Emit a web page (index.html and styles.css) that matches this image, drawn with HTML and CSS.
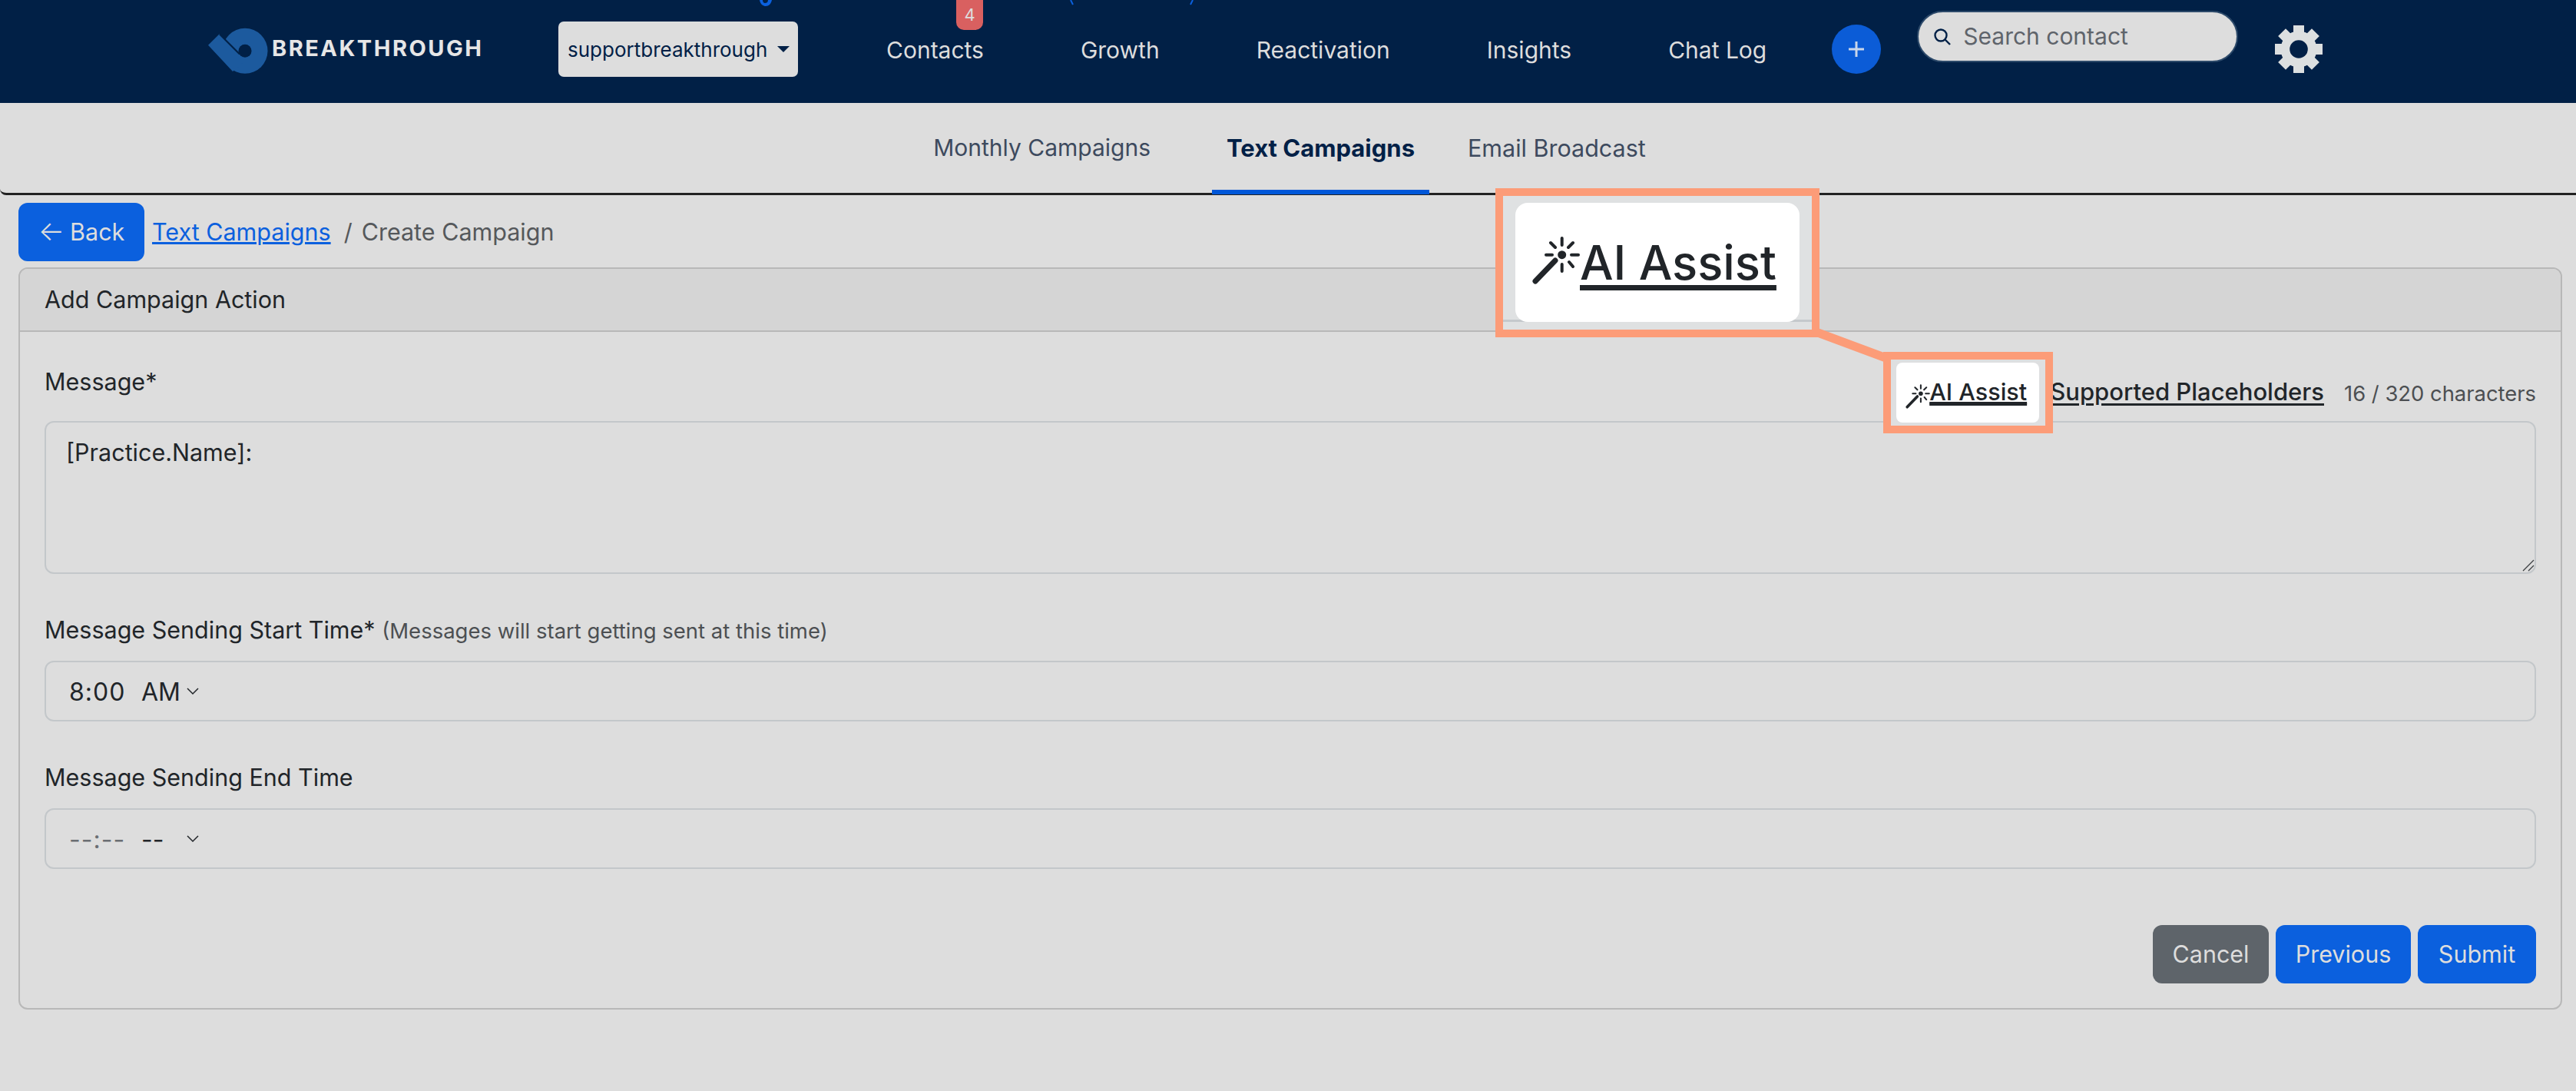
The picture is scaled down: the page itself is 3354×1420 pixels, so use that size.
FILE: index.html
```html
<!DOCTYPE html>
<html lang="en">
<head>
<meta charset="utf-8">
<title>Create Campaign</title>
<link rel="stylesheet" href="styles.css">
</head>
<body>
<svg class="defs" width="0" height="0" aria-hidden="true">
  <symbol id="wand" viewBox="0 0 90 80">
    <g stroke="#212529" stroke-linecap="round" fill="none">
      <path d="M14 66 L40 39" stroke-width="7"/>
      <path d="M48.7 10 V19 M48.7 44 V53 M28 31.7 H36 M61 31.7 H70 M34 16 L40 22 M63 16 L57 22 M58 41 L63 47" stroke-width="4"/>
    </g>
    <circle cx="48.7" cy="31.7" r="5.5" fill="#212529"/>
  </symbol>
</svg>

<header class="topbar">
  <svg class="stray stray-g" width="20" height="9" viewBox="0 0 20 9"><path d="M2 0 C3 6 7 8 10 8 C14 8 17 5 18 0 H13 C13 3 11 4 9 4 C7 4 6 2 6 0 Z" fill="#0b60de"/></svg>
  <svg class="stray stray-l" width="8" height="7" viewBox="0 0 8 7"><path d="M1 0 L4 6" stroke="#0b60de" stroke-width="2"/></svg>
  <svg class="stray stray-r" width="8" height="7" viewBox="0 0 8 7"><path d="M6 0 L3 6" stroke="#0b60de" stroke-width="2"/></svg>

  <a class="brand" href="#">
    <svg class="brand-logo" width="80" height="62" viewBox="9 9 80 62">
      <circle cx="59" cy="39.3" r="29.5" fill="#1c5a9e"/>
      <path d="M11 31.7 L25.7 17.3 L62 50 L43 66 Z" fill="#1c5a9e"/>
      <path d="M26 17.5 L52 43.5" stroke="#012046" stroke-width="2.2"/>
      <circle cx="59" cy="39.3" r="8.5" fill="#012046"/>
    </svg>
    <span class="brand-name">BREAKTHROUGH</span>
  </a>

  <button class="account">supportbreakthrough<span class="caret"></span></button>

  <nav class="mainnav">
    <a href="#" class="navlink">Contacts<span class="badge">4</span></a>
    <a href="#" class="navlink">Growth</a>
    <a href="#" class="navlink">Reactivation</a>
    <a href="#" class="navlink">Insights</a>
    <a href="#" class="navlink">Chat Log</a>
  </nav>

  <button class="add" aria-label="Add">
    <svg width="24" height="24" viewBox="0 0 24 24"><path d="M12 2 V22 M2 12 H22" stroke="#c9d6ea" stroke-width="3"/></svg>
  </button>

  <div class="search">
    <svg width="24" height="24" viewBox="0 0 24 24" fill="none" stroke="#012046" stroke-width="2.4"><circle cx="10" cy="10" r="7.5"/><path d="M15.5 15.5 L22 22"/></svg>
    <span>Search contact</span>
  </div>

  <svg class="gear" width="64" height="64" viewBox="-32 -32 64 64" aria-label="Settings">
    <g fill="#dcdfe0">
      <rect x="-7" y="-31" width="14" height="62"/>
      <rect x="-7" y="-31" width="14" height="62" transform="rotate(45)"/>
      <rect x="-7" y="-31" width="14" height="62" transform="rotate(90)"/>
      <rect x="-7" y="-31" width="14" height="62" transform="rotate(135)"/>
    </g>
    <circle r="17.5" fill="none" stroke="#dcdfe0" stroke-width="12"/>
    <circle r="11.8" fill="#012046"/>
  </svg>
</header>

<div class="subnav">
  <a href="#" class="tab tab-monthly">Monthly Campaigns</a>
  <a href="#" class="tab tab-active">Text Campaigns</a>
  <a href="#" class="tab">Email Broadcast</a>
</div>

<div class="crumbs">
  <a href="#" class="btn btn-primary btn-back"><span class="arrow">←</span> Back</a>
  <a href="#" class="crumb-link">Text Campaigns</a>
  <span class="crumb-sep">/</span>
  <span class="crumb-current">Create Campaign</span>
</div>

<section class="card">
  <h2 class="card-header">Add Campaign Action</h2>
  <div class="card-body">
    <div class="message-row">
      <label class="field-label message-label">Message*</label>
      <div class="message-tools">
        <div class="assist-wrap">
          <span class="spot"></span>
          <a href="#" class="assist"><svg class="wand"><use href="#wand"/></svg><span class="assist-text">AI Assist</span></a>
        </div>
        <a href="#" class="placeholders">Supported Placeholders</a>
        <span class="count">16 / 320 characters</span>
      </div>
    </div>
    <div class="message-wrap">
      <textarea class="message-box">[Practice.Name]:</textarea>
      <svg class="grip" width="16" height="16" viewBox="0 0 16 16"><path d="M1 15 L15 1 M8 15 L15 8" stroke="#3c3f42" stroke-width="1.3" fill="none"/></svg>
    </div>

    <label class="field-label start-label">Message Sending Start Time* <small>(Messages will start getting sent at this time)</small></label>
    <div class="time-input">
      <span class="time-val">8:00</span><span class="time-ampm">AM</span>
      <svg class="chev" width="18" height="10" viewBox="0 0 18 10"><path d="M2 1 L9 8 L16 1" fill="none" stroke="#212529" stroke-width="1.5"/></svg>
    </div>

    <label class="field-label end-label">Message Sending End Time</label>
    <div class="time-input">
      <span class="time-val time-empty">--:--</span><span class="time-ampm ampm-empty">--</span>
      <svg class="chev" width="18" height="10" viewBox="0 0 18 10"><path d="M2 1 L9 8 L16 1" fill="none" stroke="#212529" stroke-width="1.5"/></svg>
    </div>

    <div class="actions">
      <button class="btn btn-secondary btn-cancel">Cancel</button>
      <button class="btn btn-primary btn-prev">Previous</button>
      <button class="btn btn-primary btn-submit">Submit</button>
    </div>
  </div>
</section>

<svg class="connector" width="90" height="50" viewBox="0 0 90 50"><polygon points="0,0 86,32 86,44 0,12" fill="#fc9c78"/></svg>
<div class="callout">
  <div class="callout-inner"><svg class="wand-big"><use href="#wand"/></svg><span class="callout-text">AI Assist</span></div>
</div>
</body>
</html>
```

FILE: styles.css
```css
* { box-sizing: border-box; }
html, body { margin: 0; height: 100%; }
body {
  background: #dddddd;
  color: #212529;
  font-family: Inter, "Liberation Sans", sans-serif;
  font-size: 30.5px;
  line-height: 1.5;
  position: relative;
  height: 1420px;
  overflow: hidden;
}
a { color: inherit; }
button { font: inherit; border: 0; cursor: pointer; }
.defs { position: absolute; }

.topbar {
  position: relative;
  height: 134px;
  background: #012046;
  display: flex;
  align-items: center;
  padding-left: 271px;
}
.stray { position: absolute; top: 0; }
.stray-g { left: 987px; }
.stray-l { left: 1393px; }
.stray-r { left: 1547px; }

.brand { display: flex; align-items: center; text-decoration: none; margin-right: 101px; }
.brand-logo { margin-left: -2px; flex: none; }
.brand-name {
  margin-left: 5px;
  margin-top: -8px;
  color: #e6e6e6;
  font-weight: 700;
  font-size: 29px;
  letter-spacing: 2.5px;
  width: 272px;
  white-space: nowrap;
}
.account {
  width: 312px;
  height: 72px;
  margin-bottom: 6px;
  background: #dddddd;
  color: #012046;
  border-radius: 7px;
  display: flex;
  align-items: center;
  padding: 0 11px 0 12px;
  font-size: 26px;
  white-space: nowrap;
}
.caret {
  margin-left: auto;
  border-top: 8px solid #012046;
  border-left: 8px solid transparent;
  border-right: 8px solid transparent;
}
.mainnav { display: flex; gap: 126px; margin-left: 115px; margin-top: -3px; font-size: 30px; }
.navlink { position: relative; color: #dddddd; text-decoration: none; white-space: nowrap; }
.badge {
  position: absolute;
  left: 91px;
  top: -51px;
  width: 35px;
  height: 47px;
  padding-top: 9px;
  background: #d96060;
  border-radius: 0 0 10px 10px;
  color: #dddddd;
  font-size: 22px;
  line-height: 36px;
  text-align: center;
}
.add {
  width: 64px;
  height: 64px;
  margin: 0 0 6px 85px;
  border-radius: 50%;
  background: #0b5cd7;
  display: flex;
  align-items: center;
  justify-content: center;
  padding: 0;
}
.search {
  width: 418px;
  height: 67px;
  margin: 0 0 39px 47px;
  background: #dddddd;
  border: 2px solid #2d4a6a;
  border-radius: 34px;
  display: flex;
  align-items: center;
  gap: 15px;
  padding-left: 19px;
  color: #5f646b;
  font-size: 30px;
}
.gear { margin: 0 0 6px 47px; flex: none; }

.subnav {
  height: 120px;
  border-bottom: 3px solid #222222;
  border-bottom-left-radius: 8px;
  display: flex;
  justify-content: center;
  gap: 31px;
  font-size: 30.5px;
}
.tab {
  display: block;
  height: 119px;
  padding: 36px 19px 0;
  color: #3d4a5e;
  text-decoration: none;
  white-space: nowrap;
  position: relative;
}
.tab-monthly { font-size: 30px; margin-left: 4px; }
.tab-active {
  margin-left: 30px;
  color: #012046;
  font-weight: 700;
  font-size: 31px;
  border-bottom: 6px solid #0057d8;
}

.crumbs {
  display: flex;
  align-items: center;
  height: 76px;
  margin: 10px 0 0 24px;
}
.btn {
  display: inline-flex;
  align-items: center;
  justify-content: center;
  height: 76px;
  padding: 0;
  border-radius: 12px;
  color: #dddddd;
  text-decoration: none;
  white-space: nowrap;
}
.btn-primary { background: #0b60de; }
.btn-secondary { background: #5e646a; }
.btn-back { width: 164px; gap: 7px; }
.btn-cancel { width: 151px; }
.btn-prev { width: 176px; }
.btn-submit { width: 154px; }
.arrow { font-weight: 300; font-size: 36px; line-height: 1; margin-top: -4px; }
.crumb-link { margin-left: 10px; color: #0b60de; }
.crumb-sep { margin: 0 12px 0 17px; color: #55585b; }
.crumb-current { color: #55585b; }

.card {
  margin: 8px 18px 0 24px;
  height: 966px;
  border: 2px solid #b8b8b8;
  border-radius: 12px;
}
.card-header {
  margin: 0;
  height: 82px;
  padding: 0 32px;
  background: #d5d5d5;
  border-bottom: 2px solid #b8b8b8;
  border-radius: 10px 10px 0 0;
  font-size: 30.5px;
  font-weight: 400;
  line-height: 80px;
}
.card-body { padding: 0 32px; }
.field-label { display: block; color: #212529; }
.message-row {
  display: flex;
  justify-content: space-between;
  align-items: flex-start;
  height: 116px;
}
.message-label { padding-top: 42px; }
.message-tools { display: flex; align-items: flex-start; padding-top: 40px; }
.assist-wrap { position: relative; z-index: 2; margin-right: 14px; }
.spot {
  position: absolute;
  left: -17px;
  top: -14px;
  width: 221px;
  height: 106px;
  border: 10px solid #fc9c78;
  background: #dedfe0;
}
.assist {
  position: relative;
  display: flex;
  align-items: flex-start;
  width: 186px;
  height: 78px;
  padding: 18px 0 0 11px;
  background: #ffffff;
  border-radius: 8px;
  font-weight: 500;
  font-size: 30.5px;
  line-height: 40px;
  color: #212529;
}
.wand { width: 46px; height: 41px; margin-left: -4px; margin-top: 6px; flex: none; margin-right: -10px; }
.assist-text { text-decoration: underline; text-decoration-thickness: 3px; text-underline-offset: 4px; }
.placeholders {
  margin-top: 18px;
  font-weight: 500;
  font-size: 31px;
  line-height: 40px;
  text-decoration-thickness: 3px;
  text-underline-offset: 4px;
  white-space: nowrap;
}
.count { margin: 20px 0 0 26px; color: #4c4f52; font-size: 27.4px; line-height: 40px; white-space: nowrap; }

.message-wrap { position: relative; height: 199px; }
.message-box {
  display: block;
  width: 100%;
  height: 199px;
  margin: 0;
  padding: 16px 26px;
  background: transparent;
  border: 2px solid #c3c7ca;
  border-radius: 12px;
  color: #212529;
  font: inherit;
  outline: 0;
  resize: none;
}
.grip { position: absolute; right: 2px; bottom: 3px; }
.start-label { margin-top: 50px; height: 63px; }
.start-label small { font-size: 27.5px; color: #4c4f52; }
.end-label { margin-top: 40px; height: 73px; padding-top: 10px; }
.time-input {
  display: flex;
  align-items: center;
  height: 79px;
  padding: 2px 0 0 30px;
  border: 2px solid #c3c7ca;
  border-radius: 12px;
  font-size: 32px;
}
.time-val { width: 71px; letter-spacing: 1px; white-space: nowrap; }
.time-ampm { margin-left: 23px; width: 46px; }
.time-empty { color: #6a6e72; }
.ampm-empty { color: #212529; }
.chev { margin-left: 12px; margin-top: -1px; flex: none; }
.actions {
  display: flex;
  justify-content: flex-end;
  gap: 9px;
  margin-top: 73px;
}

.connector { position: absolute; left: 2367px; top: 427px; z-index: 3; }
.callout {
  position: absolute;
  left: 1947px;
  top: 245px;
  width: 422px;
  height: 194px;
  border: 10px solid #fc9c78;
  background: #dfe1e2;
  z-index: 4;
}
.callout::after {
  content: "";
  position: absolute;
  left: 0;
  right: 0;
  top: 161px;
  height: 3px;
  background: #c5c9cc;
}
.callout-inner {
  position: relative;
  z-index: 1;
  margin: 9px 16px 0;
  width: 370px;
  height: 155px;
  background: #ffffff;
  border-radius: 16px;
  display: flex;
  align-items: flex-start;
  font-weight: 500;
  font-size: 61.5px;
  line-height: 76px;
  color: #212529;
}
.wand-big { width: 90px; height: 80px; margin: 36px -18px 0 12px; flex: none; }
.callout-text {
  margin-top: 40px;
  text-decoration: underline;
  text-decoration-thickness: 7px;
  text-underline-offset: 7px;
  white-space: nowrap;
}
```
